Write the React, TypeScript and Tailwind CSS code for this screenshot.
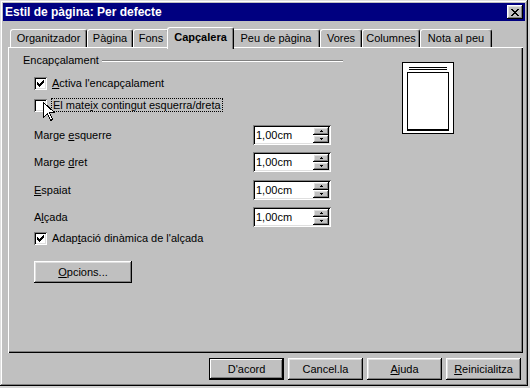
import React from "react";

const raised =
  "shadow-[inset_-1px_-1px_#000,inset_1px_1px_#fff,inset_-2px_-2px_#808080,inset_2px_2px_#dfdfdf]";
const sunken =
  "shadow-[inset_1px_1px_#808080,inset_-1px_-1px_#fff,inset_2px_2px_#000,inset_-2px_-2px_#dfdfdf]";

function Check() {
  return (
    <svg width="7" height="7" viewBox="0 0 7 7" shapeRendering="crispEdges">
      <path
        d="M6 0h1v1h-1z M5 1h2v1h-2z M0 2h1v1h-1z M4 2h3v1h-3z M0 3h2v1h-2z M3 3h3v1h-3z M0 4h5v1h-5z M1 5h3v1h-3z M2 6h1v1h-1z"
        fill="#000"
      />
    </svg>
  );
}

function Checkbox({ checked, children }: { checked?: boolean; children: React.ReactNode }) {
  return (
    <div className="flex items-center h-[13px]">
      <div className={`w-[13px] h-[13px] bg-white flex items-center justify-center shrink-0 ${sunken}`}>
        {checked && <Check />}
      </div>
      <div className="ml-[5px] leading-[13px]">{children}</div>
    </div>
  );
}

function Arrow({ up }: { up?: boolean }) {
  return (
    <svg width="5" height="3" viewBox="0 0 5 3" shapeRendering="crispEdges">
      <path d={up ? "M2 0h1v1h-1z M1 1h3v1h-3z" : "M1 0h3v1h-3z M2 1h1v1h-1z"} fill="#000" />
    </svg>
  );
}

function SpinField({ value }: { value: string }) {
  return (
    <div className={`w-[78px] h-[20px] bg-white flex items-center p-[2px] ${sunken}`}>
      <span className="flex-1 pl-[1px] leading-[13px]">{value}</span>
      <div className="w-[16px] h-full flex flex-col">
        <div className={`flex-1 bg-[#c0c0c0] flex items-center justify-center ${raised}`}>
          <Arrow up />
        </div>
        <div className={`flex-1 bg-[#c0c0c0] flex items-center justify-center ${raised}`}>
          <Arrow />
        </div>
      </div>
    </div>
  );
}

function Row({ label, value, className = "" }: { label: React.ReactNode; value: string; className?: string }) {
  return (
    <div className={`flex items-center justify-between h-[20px] w-[297px] ${className}`}>
      <span>{label}</span>
      <SpinField value={value} />
    </div>
  );
}

function Button({ children, primary }: { children: React.ReactNode; primary?: boolean }) {
  return (
    <div
      className={`w-[75px] h-[22px] flex items-center justify-center bg-[#c0c0c0] ${
        primary
          ? "shadow-[inset_0_0_0_1px_#000,inset_-2px_-2px_#000,inset_2px_2px_#fff,inset_-3px_-3px_#808080]"
          : raised
      }`}
    >
      {children}
    </div>
  );
}

const tabs: { label: string; w: string; active?: boolean }[] = [
  { label: "Organitzador", w: "w-[77px]" },
  { label: "Pàgina", w: "w-[46px]" },
  { label: "Fons", w: "w-[36px]" },
  { label: "Capçalera", w: "w-[67px]", active: true },
  { label: "Peu de pàgina", w: "w-[88px]" },
  { label: "Vores", w: "w-[42px]" },
  { label: "Columnes", w: "w-[58px]" },
  { label: "Nota al peu", w: "w-[72px]" },
];

export default function App() {
  return (
    <div
      className="w-[530px] h-[388px] bg-[#d4d4d4] text-[11px] text-black"
      style={{ fontFamily: '"Liberation Sans", Arial, sans-serif' }}
    >
      <div
        className={`relative w-[528px] h-[386px] bg-[#c0c0c0] p-[3px] flex flex-col shadow-[inset_-1px_-1px_#000,inset_1px_1px_#dfdfdf,inset_-2px_-2px_#808080,inset_2px_2px_#fff]`}
      >
        {/* Title bar */}
        <div className="h-[18px] bg-[#000080] flex items-center justify-between pl-[2px] pr-[2px]">
          <span className="text-white font-bold text-[12px] leading-[18px]">Estil de pàgina: Per defecte</span>
          <div className={`w-[16px] h-[14px] bg-[#c0c0c0] flex items-center justify-center ${raised}`}>
            <svg width="8" height="7" viewBox="0 0 8 7" shapeRendering="crispEdges">
              <path
                d="M0 0h2v1h-2z M6 0h2v1h-2z M1 1h2v1h-2z M5 1h2v1h-2z M2 2h4v1h-4z M3 3h2v1h-2z M2 4h4v1h-4z M1 5h2v1h-2z M5 5h2v1h-2z M0 6h2v1h-2z M6 6h2v1h-2z"
                fill="#000"
              />
            </svg>
          </div>
        </div>

        {/* Tabs */}
        <div className="mt-[6px] ml-[7px] h-[20px] flex items-end">
          {tabs.map((t) => (
            <div
              key={t.label}
              className={`${t.w} flex justify-center bg-[#c0c0c0] border-l border-t border-white border-r border-r-black rounded-t-[3px] shadow-[inset_-1px_0_#808080] ${
                t.active
                  ? "relative z-10 h-[22px] -mx-[2px] -mb-[2px] pt-[3px] font-bold"
                  : "h-[18px] pt-[2px]"
              }`}
            >
              <span className="leading-[13px]">{t.label}</span>
            </div>
          ))}
        </div>

        {/* Panel */}
        <div
          className={`ml-[5px] w-[515px] h-[306px] flex shadow-[inset_1px_1px_#fff,inset_-1px_-1px_#000,inset_-2px_-2px_#808080]`}
        >
          <div className="pl-[15px] pt-[7px] w-[335px] flex flex-col">
            <div className="flex items-center h-[13px]">
              <span className="leading-[13px]">Encapçalament</span>
              <div className="flex-1 ml-[3px] border-t border-t-[#808080] border-b border-b-white" />
            </div>
            <div className="pl-[11px] flex flex-col">
              <div className="mt-[10px]">
                <Checkbox checked>
                  <u>A</u>ctiva l'encapçalament
                </Checkbox>
              </div>
              <div className="mt-[9px] relative">
                <Checkbox>
                  <span className="outline outline-1 outline-dotted outline-black px-[1px]">
                    El mate<u>i</u>x contingut esquerra/dreta
                  </span>
                </Checkbox>
                <svg
                  className="absolute left-[9px] top-[3px]"
                  width="13"
                  height="20"
                  viewBox="0 0 13 20"
                  shapeRendering="crispEdges"
                >
                  <path
                    d="M0.5 0.5 L0.5 15.5 L4.5 11.5 L7.5 18.5 L9.5 17.5 L6.5 10.5 L11.5 10.5 Z"
                    fill="#fff"
                    stroke="#000"
                    strokeWidth="1"
                  />
                </svg>
              </div>
              <Row
                className="mt-[13px]"
                label={
                  <>
                    Marge <u>e</u>squerre
                  </>
                }
                value="1,00cm"
              />
              <Row
                className="mt-[7px]"
                label={
                  <>
                    Marge <u>d</u>ret
                  </>
                }
                value="1,00cm"
              />
              <Row
                className="mt-[8px]"
                label={
                  <>
                    <u>E</u>spaiat
                  </>
                }
                value="1,00cm"
              />
              <Row
                className="mt-[7px]"
                label={
                  <>
                    A<u>l</u>çada
                  </>
                }
                value="1,00cm"
              />
              <div className="mt-[5px]">
                <Checkbox checked>
                  Adap<u>t</u>ació dinàmica de l'alçada
                </Checkbox>
              </div>
              <div
                className={`mt-[16px] w-[98px] h-[22px] flex items-center justify-center bg-[#c0c0c0] ${raised}`}
              >
                <span>
                  <u>O</u>pcions...
                </span>
              </div>
            </div>
          </div>

          {/* Page preview */}
          <div className="ml-[59px] mt-[15px] w-[52px] h-[72px] bg-white border border-black flex flex-col items-center">
            <div className="mt-[4px] w-[38px] h-[3px] border-y border-black" />
            <div className="mt-[2px] w-[42px] h-[59px] border border-black border-b-2" />
          </div>
        </div>

        {/* Buttons */}
        <div className="mt-[5px] flex justify-end gap-[4px] pr-[4px]">
          <Button primary>D'acord</Button>
          <Button>Cancel.la</Button>
          <Button>
            <span>
              <u>A</u>juda
            </span>
          </Button>
          <Button>
            <span>
              <u>R</u>einicialitza
            </span>
          </Button>
        </div>
      </div>
    </div>
  );
}
